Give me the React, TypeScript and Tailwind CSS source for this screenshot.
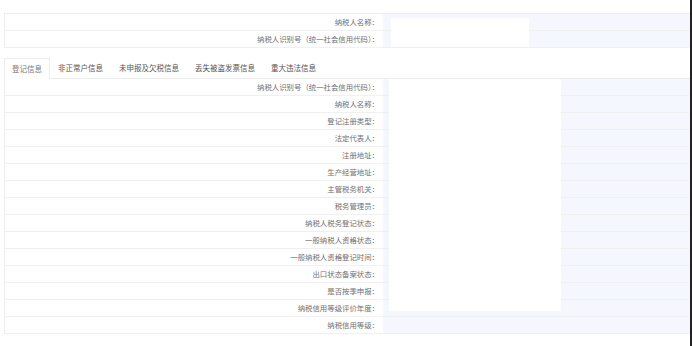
import React from "react";

const topRows = ["纳税人名称：", "纳税人识别号（统一社会信用代码）："];

const tabs = ["登记信息", "非正常户信息", "未申报及欠税信息", "丢失被盗发票信息", "重大违法信息"];

const rows = [
  "纳税人识别号（统一社会信用代码）：",
  "纳税人名称：",
  "登记注册类型：",
  "法定代表人：",
  "注册地址：",
  "生产经营地址：",
  "主管税务机关：",
  "税务管理员：",
  "纳税人税务登记状态：",
  "一般纳税人资格状态：",
  "一般纳税人资格登记时间：",
  "出口状态备案状态：",
  "是否按季申报：",
  "纳税信用等级评价年度：",
  "纳税信用等级：",
];

const Row = ({ label, h }: { label: string; h: string }) => (
  <div className={`flex ${h} border-b border-[#f0f0f0]`}>
    <div className="w-[378px] shrink-0 flex items-center justify-end pr-[4px] text-[7.4px] text-[#707070] bg-white">
      {label}
    </div>
    <div className="flex-1 bg-[#f4f7fd]" />
  </div>
);

export default function App() {
  return (
    <div
      className="relative w-[692px] h-[346px] bg-white overflow-hidden border-r-2 border-[#222]"
      style={{ fontFamily: '"Noto Sans CJK SC", "Noto Sans", sans-serif' }}
    >
      <div className="pt-[13px] pl-[4px]">
        <div className="relative border-t border-l border-[#ececec]">
          {topRows.map((l) => (
            <Row key={l} label={l} h="h-[17px]" />
          ))}
          <div className="absolute left-[386px] top-[4px] w-[138px] h-[29px] bg-white" />
        </div>

        <div className="mt-[10px] flex items-end h-[21px] border-b border-[#ececec] text-[7.5px] text-[#555]">
          {tabs.map((t, i) => (
            <div
              key={t}
              className={
                i === 0
                  ? "h-[21px] px-[7px] flex items-center border border-b-0 border-[#ececec] bg-white text-[#777] -mb-px"
                  : "h-[21px] px-[8px] flex items-center"
              }
            >
              {t}
            </div>
          ))}
        </div>

        <div className="relative border-l border-[#ececec]">
          {rows.map((l) => (
            <Row key={l} label={l} h="h-[17px]" />
          ))}
          <div className="absolute left-[384px] top-0 w-[172px] h-[232px] bg-white" />
        </div>
      </div>
    </div>
  );
}
